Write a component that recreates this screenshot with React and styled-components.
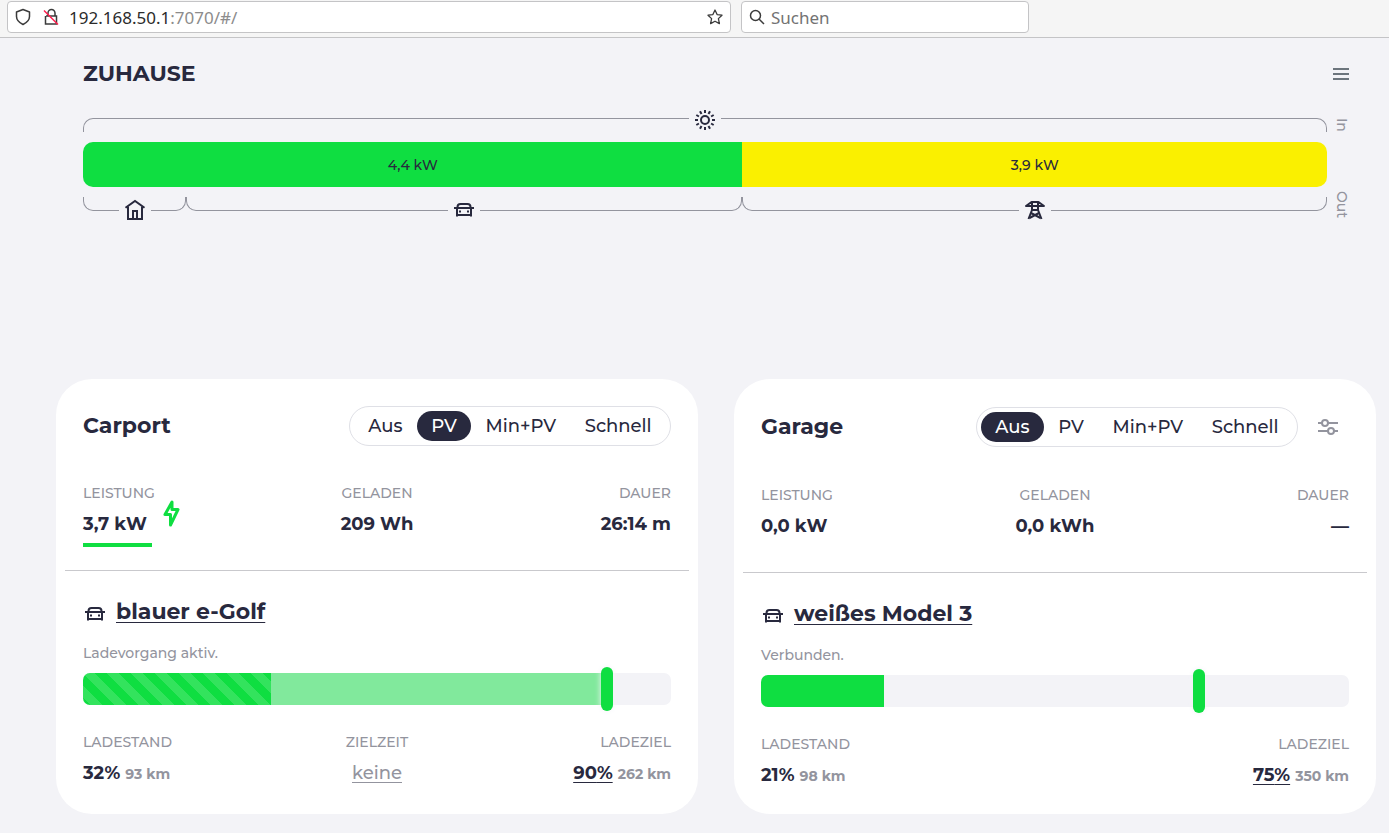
import { useState } from "react";
import styled, { createGlobalStyle, css } from "styled-components";

const GlobalStyle = createGlobalStyle`
  :root {
    --green: #0fde41;
    --light-green: #81e99c;
    --yellow: #faf000;
    --dark: #28293e;
    --gray: #93949e;
    --box: #f3f3f7;
  }
  * {
    box-sizing: border-box;
  }
  body {
    margin: 0;
    background-color: var(--box);
    color: var(--dark);
    font-family: Montserrat, Inter, sans-serif;
    font-size: 18px;
    font-weight: 500;
    line-height: 28px;
  }
  button {
    font: inherit;
    color: inherit;
    background: none;
    border: none;
    padding: 0;
    cursor: pointer;
  }
  svg {
    display: block;
    flex-shrink: 0;
  }
`;

const BrowserBar = styled.div`
  display: grid;
  grid-template-columns: 724fr 288fr 350fr;
  gap: 10px;
  height: 38px;
  padding: 1px 0 4px 7px;
  background-color: #f5f5f5;
  border-bottom: 1px solid #c4c4c6;
  font-family: "Noto Sans", sans-serif;
  font-size: 17px;
  font-weight: normal;
  line-height: 24px;
`;
const BrowserField = styled.div`
  display: flex;
  align-items: center;
  height: 32px;
  padding: 0 7px;
  background-color: white;
  border: 1px solid #c4c4c6;
  border-radius: 4px;
  color: #3b3b3b;
`;
const Address = styled.div`
  flex: 1;
  margin-left: 10px;
  padding-top: 1px;
  color: #2b2b2b;
  outline: none;
`;
const Port = styled.span`
  color: #8c8c8c;
`;
const LockIcon = styled.svg`
  margin-left: 12px;
`;
const SearchInput = styled.input`
  flex: 1;
  min-width: 0;
  margin-left: 6px;
  padding: 1px 0 0;
  border: none;
  outline: none;
  font: inherit;
  &::placeholder {
    color: #737373;
    opacity: 1;
  }
`;

const Page = styled.main`
  padding: 22px 13px 19px 56px;
`;
const Top = styled.div`
  padding: 0 27px;
`;
const SiteHeader = styled.header`
  display: flex;
  justify-content: space-between;
  align-items: center;
  margin-bottom: 30px;
`;
const Title = styled.h1`
  margin: 0;
  font-size: 22px;
  font-weight: bold;
  line-height: 28px;
`;
const MenuBtn = styled.button`
  color: #6c757d;
`;

const Flow = styled.section`
  display: grid;
  grid-template-columns: 1fr 22px;
  margin-bottom: 161px;
`;
const FlowChart = styled.div`
  display: flex;
  flex-direction: column;
  gap: 10px;
`;
const Brackets = styled.div`
  display: flex;
`;
const Bracket = styled.div`
  display: flex;
  flex: ${(props) => props.$share} 1 0;
  height: 14px;
`;
const Arm = styled.div`
  flex: 1;
  border: 0 solid var(--gray);
  ${(props) => (props.$out ? "border-bottom-width: 1px;" : "border-top-width: 1px;")}
  ${(props) =>
    props.$end
      ? css`
          border-right-width: 1px;
          border-radius: ${props.$out ? "0 0 10px 0" : "0 10px 0 0"};
        `
      : css`
          border-left-width: 1px;
          border-radius: ${props.$out ? "0 0 0 10px" : "10px 0 0 0"};
        `}
`;
const BracketIcon = styled.div`
  display: flex;
  flex: 0 0 32px;
  justify-content: center;
  align-items: center;
  height: ${(props) => (props.$out ? "26px" : "4px")};
`;
const EnergyBar = styled.div`
  display: flex;
  height: 45px;
  border-radius: 10px;
  overflow: hidden;
`;
const Energy = styled.div`
  flex: ${(props) => props.$share} 1 0;
  background-color: ${(props) => props.$color};
  font-size: 14px;
  line-height: 46px;
  text-align: center;
`;
const Sides = styled.div`
  display: flex;
  flex-direction: column;
  justify-content: space-between;
  align-items: center;
  padding-left: 8px;
  height: 100px;
  color: var(--gray);
  font-size: 14px;
  line-height: 14px;
`;
const Side = styled.span`
  writing-mode: vertical-rl;
`;

const Loadpoints = styled.div`
  display: grid;
  grid-template-columns: repeat(2, minmax(0, 1fr));
  gap: 36px;
`;
const Card = styled.section`
  padding: 27px 27px 25px;
  background-color: white;
  border-radius: 36px;
`;
const CardHeader = styled.div`
  display: flex;
  align-items: center;
  min-height: 40px;
  margin-bottom: 37px;
`;
const Name = styled.h2`
  flex: 1;
  margin: 0;
  font-size: 22px;
  font-weight: bold;
  line-height: 28px;
`;
const Modes = styled.div`
  display: flex;
  min-width: 322px;
  height: 40px;
  padding: 4px;
  border: 1px solid #dfe0e6;
  border-radius: 20px;
`;
const ModeBtn = styled.button`
  flex: 1 1 auto;
  padding: 0 12px;
  border-radius: 15px;
  ${(props) =>
    props.$active &&
    css`
      background-color: var(--dark);
      color: white;
    `}
`;
const SettingsBtn = styled.button`
  padding: 9px;
  margin-left: 9px;
  color: var(--gray);
`;

const Values = styled.div`
  display: grid;
  grid-template-columns: repeat(3, 1fr);
`;
const Cell = styled.div`
  text-align: ${(props) => props.$align};
`;
const Label = styled.div`
  margin-bottom: 7px;
  color: var(--gray);
  font-size: 14px;
  line-height: 20px;
  text-transform: uppercase;
`;
const Value = styled.div`
  height: 28px;
  font-weight: bold;
`;
const Range = styled.span`
  color: var(--gray);
  font-size: 14px;
`;
const Power = styled.div`
  display: flex;
  align-items: center;
  gap: 8px;
`;
const PowerLine = styled.div`
  width: 96%;
  height: 4px;
  margin-top: 5px;
  background-color: ${(props) => (props.$active ? "var(--green)" : "transparent")};
`;
const LinkBtn = styled.button`
  text-decoration: underline;
  text-decoration-thickness: 1px;
  text-underline-offset: 3px;
`;
const NoTime = styled(LinkBtn)`
  color: var(--gray);
`;
const Divider = styled.hr`
  height: 1px;
  margin: 23px -18px 27px;
  border: none;
  background-color: #c9c9cd;
`;
const Vehicle = styled.div`
  display: flex;
  align-items: center;
  gap: 9px;
  margin-bottom: 17px;
`;
const CarHolder = styled.span`
  padding-top: 4px;
`;
const VehicleBtn = styled(LinkBtn)`
  font-size: 22px;
  font-weight: bold;
`;
const Status = styled.div`
  margin-bottom: 10px;
  color: var(--gray);
  font-size: 14px;
  line-height: 20px;
`;
const Soc = styled.div`
  position: relative;
  height: 32px;
  margin-bottom: 27px;
`;
const SocTrack = styled.div`
  display: flex;
  height: 32px;
  border-radius: 7px;
  background-color: var(--box);
  overflow: hidden;
`;
const SocFill = styled.div`
  background-color: ${(props) => props.$color};
  ${(props) =>
    props.$striped &&
    css`
      background-image: linear-gradient(
        45deg,
        rgba(255, 255, 255, 0.15) 25%,
        transparent 25%,
        transparent 50%,
        rgba(255, 255, 255, 0.15) 50%,
        rgba(255, 255, 255, 0.15) 75%,
        transparent 75%
      );
      background-size: 24px 24px;
    `}
`;
const LimitSlider = styled.input`
  position: absolute;
  top: -6px;
  left: 0;
  width: 100%;
  height: 44px;
  margin: 0;
  appearance: none;
  background: transparent;
  cursor: pointer;
  &::-webkit-slider-thumb {
    appearance: none;
    width: 12px;
    height: 44px;
    border: none;
    border-radius: 6px;
    background-color: var(--green);
    box-shadow: 0 0 6px var(--box);
  }
`;

const SunIcon = () => (
  <svg width="24" height="24" viewBox="0 0 24 24" fill="none" stroke="currentColor" strokeWidth="2">
    <circle cx="12" cy="12" r="4" />
    {Array.from({ length: 12 }, (_, i) => (
      <path key={i} d="M12 2v3" transform={`rotate(${i * 30} 12 12)`} />
    ))}
  </svg>
);

const HomeIcon = () => (
  <svg width="24" height="24" viewBox="0 0 24 24" fill="none" stroke="currentColor" strokeWidth="2">
    <path d="M2.500 9.800 12 3l9.500 6.800" />
    <path d="M5 8.500V21h14V8.500M10 21v-8h4v8" />
  </svg>
);

const CarIcon = () => (
  <svg width="24" height="24" viewBox="0 0 24 24" fill="none" stroke="currentColor" strokeWidth="2">
    <path d="M2 10h20M5.500 10V9q0-3 3-3h7q3 0 3 3v1" />
    <path d="M5 10v8.500M19 10v8.500M5 17h14" />
    <path d="M7 13.500h2M15 13.500h2" />
  </svg>
);

const GridIcon = () => (
  <svg
    width="24"
    height="24"
    viewBox="0 0 24 24"
    fill="none"
    stroke="currentColor"
    strokeWidth="2"
    strokeLinejoin="round"
  >
    <path d="M8.500 4h7l5.500 4H3zM9 4v8L5.500 21M15 4v8l3.500 9M9 12h6" />
    <path d="M8 15l9.500 5M16 15l-9.500 5" />
  </svg>
);

const BoltIcon = () => (
  <svg
    width="17"
    height="30"
    viewBox="0 0 17 30"
    fill="none"
    stroke="var(--green)"
    strokeWidth="3"
    strokeLinejoin="round"
  >
    <path d="M9 2 2 14.500h5.500V25L15 9.500H9z" />
  </svg>
);

const SettingsIcon = () => (
  <svg width="24" height="24" viewBox="0 0 24 24" fill="none" stroke="currentColor" strokeWidth="2">
    <path d="M2 8h4M12 8h10M2 16h10M18 16h4" />
    <circle cx="9" cy="8" r="3" />
    <circle cx="15" cy="16" r="3" />
  </svg>
);

const MenuIcon = () => (
  <svg width="16" height="12" viewBox="0 0 16 12" fill="currentColor">
    <path d="M0 0h16v2H0zM0 5h16v2H0zM0 10h16v2H0z" />
  </svg>
);

const flows = [
  { id: "home", share: 69, Icon: HomeIcon },
  { id: "car", share: 371, Icon: CarIcon },
  { id: "grid", share: 390, Icon: GridIcon },
];

const modes = ["Aus", "PV", "Min+PV", "Schnell"];

const loadpoints = [
  {
    name: "Carport",
    mode: "PV",
    power: "3,7 kW",
    charged: "209 Wh",
    duration: "26:14 m",
    charging: true,
    vehicle: "blauer e-Golf",
    status: "Ladevorgang aktiv.",
    soc: 32,
    range: "93 km",
    targetTime: "keine",
    limit: 90,
    limitRange: "262 km",
  },
  {
    name: "Garage",
    mode: "Aus",
    power: "0,0 kW",
    charged: "0,0 kWh",
    duration: "—",
    charging: false,
    settings: true,
    vehicle: "weißes Model 3",
    status: "Verbunden.",
    soc: 21,
    range: "98 km",
    limit: 75,
    limitRange: "350 km",
  },
];

const Browser = () => (
  <BrowserBar>
    <BrowserField>
      <svg width="16" height="18" viewBox="0 0 16 18" fill="none" stroke="currentColor" strokeWidth="1.500">
        <path d="M8 1.500 14.500 4v4.500c0 3.500-2.500 6-6.500 8-4-2-6.500-4.500-6.500-8V4z" strokeLinejoin="round" />
      </svg>
      <LockIcon width="16" height="18" viewBox="0 0 16 18" fill="none" stroke="currentColor" strokeWidth="1.500">
        <path d="M5 8V5a3.500 3.500 0 0 1 7 0v3M3 8h10.500v8H2.500V8" />
        <path d="M1 2.500 15 16.500" stroke="#ff1f4f" />
      </LockIcon>
      <Address role="textbox" aria-label="Adresse" tabIndex={0}>
        192.168.50.1<Port>:7070/#/</Port>
      </Address>
      <svg width="16" height="16" viewBox="0 0 16 16" fill="none" stroke="currentColor" strokeWidth="1.300">
        <path
          d="M8 1l2.100 4.600 4.900.6-3.600 3.400 1 5L8 12.200l-4.400 2.400 1-5L1 6.200l4.900-.6z"
          strokeLinejoin="round"
        />
      </svg>
    </BrowserField>
    <BrowserField>
      <svg width="16" height="16" viewBox="0 0 16 16" fill="none" stroke="currentColor" strokeWidth="1.500">
        <circle cx="6.500" cy="6.500" r="5" />
        <path d="M10 10l5 5" />
      </svg>
      <SearchInput type="text" placeholder="Suchen" aria-label="Suchen" />
    </BrowserField>
  </BrowserBar>
);

const EnergyFlow = () => (
  <Flow>
    <FlowChart>
      <Brackets>
        <Bracket $share={1}>
          <Arm />
          <BracketIcon>
            <SunIcon />
          </BracketIcon>
          <Arm $end />
        </Bracket>
      </Brackets>
      <EnergyBar>
        <Energy $share={44} $color="var(--green)">
          4,4 kW
        </Energy>
        <Energy $share={39} $color="var(--yellow)">
          3,9 kW
        </Energy>
      </EnergyBar>
      <Brackets>
        {flows.map(({ id, share, Icon }) => (
          <Bracket key={id} $share={share}>
            <Arm $out />
            <BracketIcon $out>
              <Icon />
            </BracketIcon>
            <Arm $out $end />
          </Bracket>
        ))}
      </Brackets>
    </FlowChart>
    <Sides>
      <Side>In</Side>
      <Side>Out</Side>
    </Sides>
  </Flow>
);

const Loadpoint = ({ data }) => {
  const [mode, setMode] = useState(data.mode);
  const [limit, setLimit] = useState(data.limit);

  return (
    <Card>
      <CardHeader>
        <Name>{data.name}</Name>
        <Modes role="group" aria-label="Modus">
          {modes.map((m) => (
            <ModeBtn key={m} $active={m === mode} aria-pressed={m === mode} onClick={() => setMode(m)}>
              {m}
            </ModeBtn>
          ))}
        </Modes>
        {data.settings && (
          <SettingsBtn aria-label="Einstellungen">
            <SettingsIcon />
          </SettingsBtn>
        )}
      </CardHeader>
      <Values>
        <Power>
          <div>
            <Label>Leistung</Label>
            <Value>{data.power}</Value>
            <PowerLine $active={data.charging} />
          </div>
          {data.charging && <BoltIcon />}
        </Power>
        <Cell $align="center">
          <Label>Geladen</Label>
          <Value>{data.charged}</Value>
        </Cell>
        <Cell $align="right">
          <Label>Dauer</Label>
          <Value>{data.duration}</Value>
        </Cell>
      </Values>
      <Divider />
      <Vehicle>
        <CarHolder>
          <CarIcon />
        </CarHolder>
        <VehicleBtn>{data.vehicle}</VehicleBtn>
      </Vehicle>
      <Status>{data.status}</Status>
      <Soc>
        <SocTrack>
          <SocFill
            $color="var(--green)"
            $striped={data.charging}
            style={{ width: `${data.soc}%` }}
          />
          {data.charging && (
            <SocFill $color="var(--light-green)" style={{ width: `${limit - data.soc}%` }} />
          )}
        </SocTrack>
        <LimitSlider
          type="range"
          min="0"
          max="100"
          aria-label="Ladeziel"
          value={limit}
          onChange={(e) => setLimit(Number(e.target.value))}
        />
      </Soc>
      <Values>
        <Cell $align="left">
          <Label>Ladestand</Label>
          <Value>
            {data.soc}% <Range>{data.range}</Range>
          </Value>
        </Cell>
        <Cell $align="center">
          {data.targetTime && (
            <>
              <Label>Zielzeit</Label>
              <NoTime>{data.targetTime}</NoTime>
            </>
          )}
        </Cell>
        <Cell $align="right">
          <Label>Ladeziel</Label>
          <Value>
            <LinkBtn>{limit}%</LinkBtn> <Range>{data.limitRange}</Range>
          </Value>
        </Cell>
      </Values>
    </Card>
  );
};

const App = () => {
  return (
    <>
      <GlobalStyle />
      <Browser />
      <Page>
        <Top>
          <SiteHeader>
            <Title>ZUHAUSE</Title>
            <MenuBtn aria-label="Menü">
              <MenuIcon />
            </MenuBtn>
          </SiteHeader>
          <EnergyFlow />
        </Top>
        <Loadpoints>
          {loadpoints.map((lp) => (
            <Loadpoint key={lp.name} data={lp} />
          ))}
        </Loadpoints>
      </Page>
    </>
  );
};

export default App;
